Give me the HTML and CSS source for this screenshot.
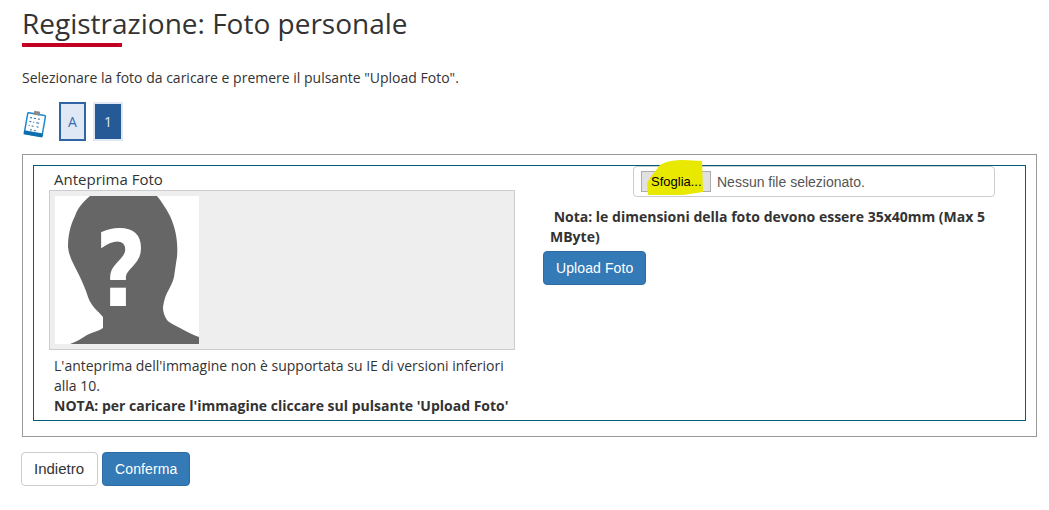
FILE: index.html
```html
<!DOCTYPE html>
<html lang="it">
<head>
    <meta charset="UTF-8">
    <title>Registrazione: Foto personale</title>
    <link rel="stylesheet" href="styles.css">
</head>
<body>
    <h1 class="page-title">Registrazione: Foto personale</h1>
    <div class="title-rule"></div>
    <p class="intro">Selezionare la foto da caricare e premere il pulsante "Upload Foto".</p>

    <div class="steps">
        <svg class="steps-icon" width="24" height="28" viewBox="0 0 24 28">
            <g transform="rotate(10 12 14)">
                <rect x="3" y="4" width="18" height="21" rx="1" fill="#fff" stroke="#1c8ad0" stroke-width="1.5"/>
                <rect x="2.5" y="22" width="19" height="4" fill="#0f6fae"/>
                <rect x="9" y="1" width="6" height="4" fill="#8a8a8a"/>
                <g fill="#2a6fa8">
                    <rect x="6" y="8" width="2" height="1"/><rect x="10" y="8" width="2" height="1"/><rect x="14" y="8" width="2" height="1"/>
                    <rect x="6" y="12" width="2" height="1"/><rect x="10" y="12" width="1" height="1"/><rect x="13" y="12" width="3" height="1"/>
                    <rect x="6" y="16" width="1" height="1"/><rect x="9" y="16" width="2" height="1"/><rect x="14" y="16" width="2" height="1"/>
                    <rect x="8" y="20" width="2" height="1"/><rect x="12" y="20" width="2" height="1"/>
                </g>
            </g>
        </svg>
        <span class="step step-done">A</span>
        <span class="step step-current">1</span>
    </div>

    <div class="outer-box">
        <div class="inner-box">
            <div class="col-left">
                <div class="preview-label">Anteprima Foto</div>
                <div class="preview-box">
                    <svg class="preview-img" width="144" height="148" viewBox="0 0 144 148">
                        <rect width="144" height="148" fill="#fff"/>
                        <path fill="#666" d="M35 0 C27 7 22 13 20 20 C15 30 13 40 13 51 C14 62 20 70 25 81 C28 88 31 94 33 101 C36 110 43 115 48 121 L48 132 C44 135 38 136 32 139 C26 143 21 146 15 148 L144 148 L144 141 C138 139 131 135 125 132 C120 129 114 127 112 124 C109 120 108 115 108 111 C109 105 110 101 112 97 C115 91 118 86 119 81 C120 74 121 67 122 61 C123 50 122 35 115 20 C111 12 106 5 102 0 Z"/>
                        <text class="preview-mark" transform="translate(66 110) scale(0.85 1)" text-anchor="middle">?</text>
                    </svg>
                </div>
                <div class="preview-note">
                    L'anteprima dell'immagine non è supportata su IE di versioni inferiori alla 10.<br>
                    <strong>NOTA: per caricare l'immagine cliccare sul pulsante 'Upload Foto'</strong>
                </div>
            </div>
            <div class="col-right">
                <div class="file-field">
                    <span class="file-button"><span class="file-button-label">Sfoglia...</span></span>
                    <span class="file-name">Nessun file selezionato.</span>
                    <svg class="highlight" width="60" height="36" viewBox="0 0 60 36">
                        <path fill="#e9e900" d="M5 35 L4 24 C6 18 12 12 16 6 C20 2 30 0 40 0 L59 1 L60 32 L40 35 Z"/>
                    </svg>
                </div>
                <p class="file-note"><strong>&nbsp;Nota: le dimensioni della foto devono essere 35x40mm (Max 5 MByte)</strong></p>
                <button class="btn btn-primary" type="button">Upload Foto</button>
            </div>
        </div>
    </div>

    <div class="actions">
        <button class="btn btn-default" type="button">Indietro</button>
        <button class="btn btn-primary" type="button">Conferma</button>
    </div>
</body>
</html>
```

FILE: styles.css
```css
* {
    box-sizing: border-box;
}

body {
    font-family: "Open Sans", sans-serif;
    font-size: 14px;
    line-height: 20px;
    color: #333;
    background-color: #fff;
    margin: 0;
    padding: 5px 12px 0 22px;
}

.page-title {
    font-size: 28px;
    font-weight: 400;
    line-height: 36px;
    margin: 0 0 2px;
}

.title-rule {
    width: 100px;
    height: 4px;
    background-color: #c20022;
}

.intro {
    margin: 21px 0 0;
}

.steps {
    display: flex;
    align-items: center;
    height: 39px;
    margin-top: 14px;
}

.steps-icon {
    margin: 4px 0 0 1px;
}

.step {
    display: flex;
    align-items: center;
    justify-content: center;
    height: 39px;
}

.step-done {
    width: 27px;
    margin-left: 12px;
    color: #3a6cb0;
    background-color: #dfe8f4;
    border: 2px solid #2f65a5;
}

.step-current {
    width: 30px;
    margin-left: 7px;
    color: #dfe8f4;
    background-color: #265a96;
    border: 2px solid #dfe8f4;
}

.outer-box {
    height: 283px;
    margin-top: 13px;
    padding: 10px;
    border: 1px solid #999;
}

.inner-box {
    display: flex;
    height: 256px;
    border: 1px solid #006073;
}

.col-left {
    width: 496px;
    padding-left: 15px;
}

.preview-label {
    padding: 3px 0 0 5px;
    font-size: 15px;
    line-height: 21px;
}

.preview-box {
    width: 466px;
    height: 160px;
    padding: 5px;
    background-color: #eee;
    border: 1px solid #ccc;
}

.preview-img {
    display: block;
}

.preview-mark {
    font-family: "DejaVu Sans", sans-serif;
    font-size: 105px;
    font-weight: 700;
    fill: #fff;
}

.preview-note {
    padding: 6px 0 0 5px;
    width: 466px;
}

.col-right {
    flex: 1;
    padding-left: 13px;
}

.file-field {
    position: relative;
    display: flex;
    align-items: center;
    width: 362px;
    height: 31px;
    margin-left: 90px;
    padding-left: 7px;
    border: 1px solid #ccc;
    border-radius: 4px;
    font-family: "Liberation Sans", sans-serif;
}

.file-button {
    width: 70px;
    height: 21px;
    padding-left: 9px;
    font-size: 13px;
    line-height: 20px;
    color: #000;
    background-color: #e1e1e1;
    border: 1px solid #adadad;
}

/* stays above the highlighter mark */
.file-button-label {
    position: relative;
    z-index: 1;
}

.file-name {
    margin-left: 6px;
    color: #555;
}

/* highlighter mark drawn over the browse button */
.highlight {
    position: absolute;
    left: 9px;
    top: -7px;
}

.file-note {
    width: 450px;
    margin: 10px 0 4px 7px;
}

.btn {
    height: 34px;
    padding: 6px 12px;
    font-family: "Liberation Sans", sans-serif;
    font-size: 14px;
    line-height: 20px;
    border: 1px solid transparent;
    border-radius: 4px;
}

.btn-primary {
    color: #fff;
    letter-spacing: 0.1px;
    background-color: #337ab7;
    border-color: #2e6da4;
}

.btn-default {
    padding-right: 13px;
    font-size: 15px;
    color: #333;
    background-color: #fff;
    border-color: #ccc;
}

.actions {
    display: flex;
    gap: 4px;
    margin: 15px 0 0 -1px;
}
```
